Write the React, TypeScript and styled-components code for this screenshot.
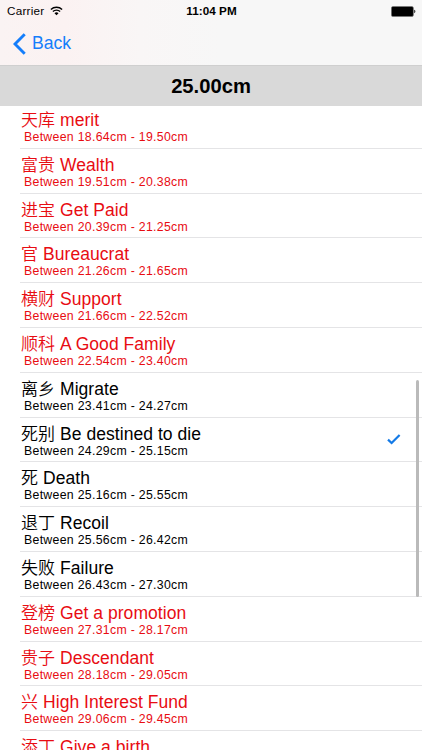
import React from "react";
import styled, { createGlobalStyle } from "styled-components";

const GlobalStyle = createGlobalStyle`
  * { box-sizing: border-box; }
  body {
    margin: 0;
    background: #fff;
    font-family: "Liberation Sans", "Noto Sans CJK SC", sans-serif;
  }
`;

const Screen = styled.div`
  width: 422px;
  height: 750px;
  display: flex;
  flex-direction: column;
  overflow: hidden;
  background: #fff;
  color: #000;
`;

const TopBar = styled.header`
  flex: none;
  height: 65px;
  background: linear-gradient(90deg, #faf3f3 0, #fbf2f2 65px, #f9f6f6 140px, #f7f7f7 220px);
`;

const StatusBar = styled.div`
  height: 22px;
  display: grid;
  grid-template-columns: 1fr auto 1fr;
  align-items: center;
  padding: 0 6px 0 7px;
  font-size: 11.7px;
  line-height: 22px;
`;

const Carrier = styled.div`
  display: flex;
  align-items: center;
  gap: 6px;
  letter-spacing: 0.25px;
`;

const Clock = styled.div`
  font-weight: 700;
  letter-spacing: 0.05px;
`;

const BatteryIcon = styled.svg`
  justify-self: end;
`;

const BackButton = styled.button`
  height: 43px;
  display: flex;
  align-items: center;
  gap: 6px;
  padding: 0 0 0 13px;
  border: 0;
  background: none;
  color: #147efb;
  font: 17.6px/43px "Liberation Sans", sans-serif;
`;

const Measurement = styled.h1`
  flex: none;
  height: 41px;
  margin: 0;
  background: #d9d9d9;
  border-top: 1px solid #cfcfcf;
  text-align: center;
  font-size: 20.2px;
  line-height: 40px;
  font-weight: 700;
`;

const ListArea = styled.main`
  position: relative;
  flex: 1;
  overflow: hidden;
`;

const List = styled.ul`
  list-style: none;
  margin: -2.1px 0 0;
  padding: 0 0 0 20px;
`;

const Row = styled.li<{ $lucky: boolean }>`
  height: 44.82px;
  display: flex;
  justify-content: space-between;
  align-items: center;
  padding-right: 21px;
  border-bottom: 1px solid #e4e4e6;
  color: ${(p) => (p.$lucky ? "#e80c12" : "#000")};
`;

const Labels = styled.div`
  height: 100%;
  padding: 6px 0 0 1px;
  white-space: nowrap;
`;

const Title = styled.div`
  height: 20px;
  display: flex;
  gap: 5px;
  font-size: 17.5px;
  line-height: 20px;
  letter-spacing: 0.05px;
`;

const Hanzi = styled.span`
  font-family: "Noto Sans CJK SC", sans-serif;
  font-weight: 350;
  font-size: 17px;
  line-height: 18px;
  letter-spacing: 0;
`;

const Range = styled.div`
  padding-left: 3px;
  font-size: 12.3px;
  line-height: 14px;
  letter-spacing: 0.3px;
`;

const ScrollThumb = styled.div`
  position: absolute;
  right: 3px;
  top: 274px;
  width: 3px;
  height: 217px;
  border-radius: 1.5px;
  background: #bababa;
`;

type Entry = { hanzi: string; name: string; from: string; to: string; lucky: boolean; selected?: boolean };

const entries: Entry[] = [
  { hanzi: "天库", name: "merit", from: "18.64", to: "19.50", lucky: true },
  { hanzi: "富贵", name: "Wealth", from: "19.51", to: "20.38", lucky: true },
  { hanzi: "进宝", name: "Get Paid", from: "20.39", to: "21.25", lucky: true },
  { hanzi: "官", name: "Bureaucrat", from: "21.26", to: "21.65", lucky: true },
  { hanzi: "横财", name: "Support", from: "21.66", to: "22.52", lucky: true },
  { hanzi: "顺科", name: "A Good Family", from: "22.54", to: "23.40", lucky: true },
  { hanzi: "离乡", name: "Migrate", from: "23.41", to: "24.27", lucky: false },
  { hanzi: "死别", name: "Be destined to die", from: "24.29", to: "25.15", lucky: false, selected: true },
  { hanzi: "死", name: "Death", from: "25.16", to: "25.55", lucky: false },
  { hanzi: "退丁", name: "Recoil", from: "25.56", to: "26.42", lucky: false },
  { hanzi: "失败", name: "Failure", from: "26.43", to: "27.30", lucky: false },
  { hanzi: "登榜", name: "Get a promotion", from: "27.31", to: "28.17", lucky: true },
  { hanzi: "贵子", name: "Descendant", from: "28.18", to: "29.05", lucky: true },
  { hanzi: "兴", name: "High Interest Fund", from: "29.06", to: "29.45", lucky: true },
  { hanzi: "添丁", name: "Give a birth", from: "29.46", to: "30.32", lucky: true },
];

const Wifi = () => (
  <svg width="13" height="10" viewBox="0 0 13 10" fill="none" stroke="#000" strokeWidth="1.4">
    <path d="M0.9 3.5a8 8 0 0 1 11.2 0" />
    <path d="M2.9 5.6a5.1 5.1 0 0 1 7.2 0" />
    <path d="M6.5 9.3 4.5 7.2a2.9 2.9 0 0 1 4 0z" fill="#000" stroke="none" />
  </svg>
);

const Battery = () => (
  <BatteryIcon width="25" height="11" viewBox="0 0 25 11">
    <rect x="0.4" y="0.5" width="22" height="10" rx="1.5" fill="#000" stroke="#777" strokeWidth="0.6" />
    <path d="M23.3 3.8c1.4.3 1.4 3.1 0 3.4z" fill="#000" />
  </BatteryIcon>
);

const Chevron = () => (
  <svg width="13" height="22" viewBox="0 0 13 22" fill="none" stroke="#147efb" strokeWidth="2.9">
    <path d="M11.7 1.2 2 11l9.7 9.8" />
  </svg>
);

const Check = () => (
  <svg width="14" height="11" viewBox="0 0 14 11" fill="none" stroke="#147ae6" strokeWidth="2.2">
    <path d="M1 5.6 4.6 9 12.6 1" />
  </svg>
);

export default function App() {
  return (
    <>
      <GlobalStyle />
      <Screen>
        <TopBar>
          <StatusBar>
            <Carrier>
              Carrier
              <Wifi />
            </Carrier>
            <Clock>11:04 PM</Clock>
            <Battery />
          </StatusBar>
          <BackButton>
            <Chevron />
            Back
          </BackButton>
        </TopBar>
        <Measurement>25.00cm</Measurement>
        <ListArea>
          <List>
            {entries.map((e) => (
              <Row key={e.from} $lucky={e.lucky}>
                <Labels>
                  <Title>
                    <Hanzi>{e.hanzi}</Hanzi>
                    <span>{e.name}</span>
                  </Title>
                  <Range>
                    Between {e.from}cm - {e.to}cm
                  </Range>
                </Labels>
                {e.selected && <Check />}
              </Row>
            ))}
          </List>
          <ScrollThumb />
        </ListArea>
      </Screen>
    </>
  );
}
